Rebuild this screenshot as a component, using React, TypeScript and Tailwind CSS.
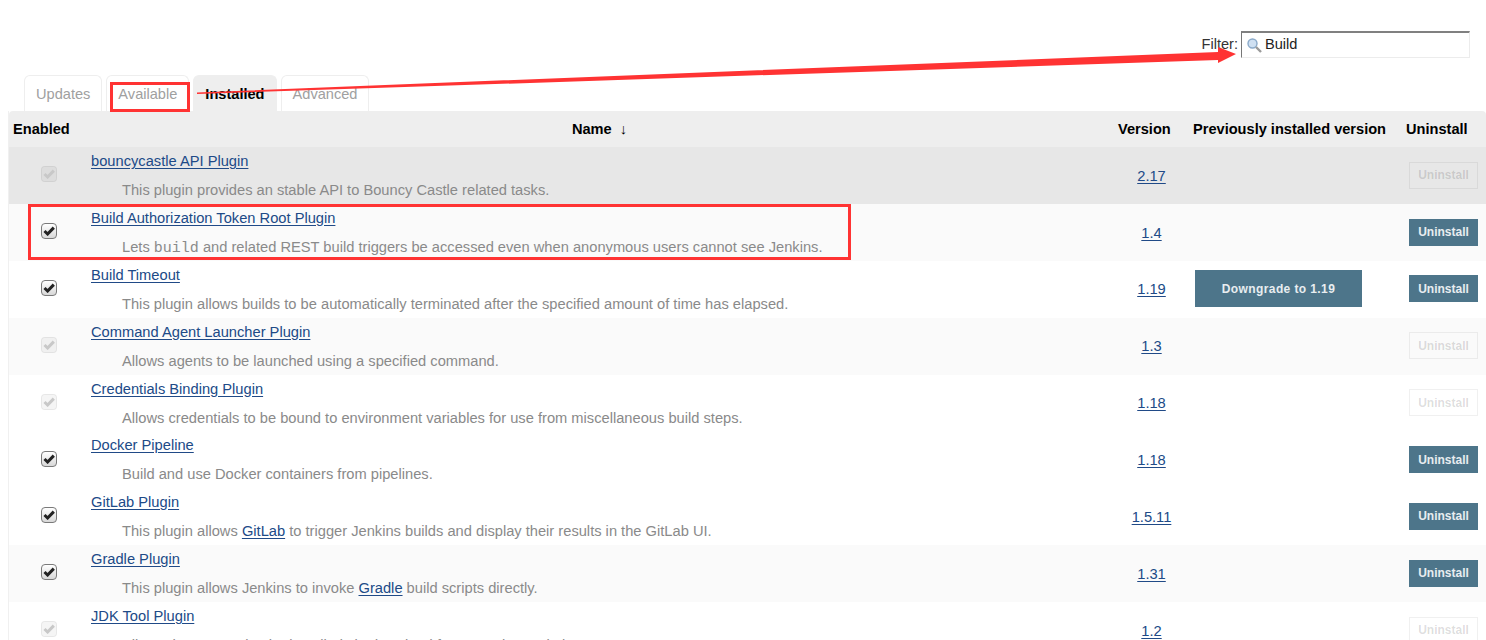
import React from "react";

type Row = {
  name: string;
  desc: React.ReactNode;
  version: string;
  enabled: boolean;
  downgrade?: string;
  bg: string;
};

const A = ({ children }: { children: React.ReactNode }) => (
  <a className="text-[#204a87] underline underline-offset-2" href="#">{children}</a>
);

const rows: Row[] = [
  { name: "bouncycastle API Plugin", desc: "This plugin provides an stable API to Bouncy Castle related tasks.", version: "2.17", enabled: false, bg: "bg-[#e7e7e7]" },
  { name: "Build Authorization Token Root Plugin", desc: <>Lets <code className="font-['Liberation_Mono',monospace] text-[15px]">build</code> and related REST build triggers be accessed even when anonymous users cannot see Jenkins.</>, version: "1.4", enabled: true, bg: "bg-[#fafafa]" },
  { name: "Build Timeout", desc: "This plugin allows builds to be automatically terminated after the specified amount of time has elapsed.", version: "1.19", enabled: true, downgrade: "Downgrade to 1.19", bg: "bg-white" },
  { name: "Command Agent Launcher Plugin", desc: "Allows agents to be launched using a specified command.", version: "1.3", enabled: false, bg: "bg-[#fafafa]" },
  { name: "Credentials Binding Plugin", desc: "Allows credentials to be bound to environment variables for use from miscellaneous build steps.", version: "1.18", enabled: false, bg: "bg-white" },
  { name: "Docker Pipeline", desc: "Build and use Docker containers from pipelines.", version: "1.18", enabled: true, bg: "bg-white" },
  { name: "GitLab Plugin", desc: <>This plugin allows <A>GitLab</A> to trigger Jenkins builds and display their results in the GitLab UI.</>, version: "1.5.11", enabled: true, bg: "bg-white" },
  { name: "Gradle Plugin", desc: <>This plugin allows Jenkins to invoke <A>Gradle</A> build scripts directly.</>, version: "1.31", enabled: true, bg: "bg-[#fafafa]" },
  { name: "JDK Tool Plugin", desc: "Allows the JDK tool to be installed via download from Oracle's website.", version: "1.2", enabled: false, bg: "bg-white" },
];

const Check = ({ on }: { on: boolean }) => (
  <span className={`flex h-[16px] w-[16px] items-center justify-center rounded-[4px] border ${on ? "border-[#7a7a7a] bg-gradient-to-b from-white to-[#d8d8d8]" : "border-black/[0.06] bg-black/[0.04]"}`}>
    <svg width="12" height="10" viewBox="0 0 12 10">
      <path d="M1.5 5 L4.6 8 L10.8 1.6" fill="none" stroke={on ? "#222" : "#c8c8c8"} strokeWidth="3" />
    </svg>
  </span>
);

const Tab = ({ label, active }: { label: string; active?: boolean }) => (
  <div className={`flex h-[36px] items-center rounded-t-[6px] border border-b-0 px-[11px] pt-[2px] ${active ? "border-[#eeeeee] bg-[#eeeeee] font-bold text-black" : "border-[#eeeeee] bg-white text-[#a0a0a0]"}`}>
    {label}
  </div>
);

const grid = "grid grid-cols-[82px_1fr_78px_214px_81px]";

export default function App() {
  return (
    <div className="relative h-[640px] w-[1486px] overflow-hidden bg-white font-['Liberation_Sans',Arial,sans-serif] text-[14.6px] text-[#333]">
      <div className="flex h-[75px] items-start justify-end pt-[31px] pr-[16px]">
        <span className="mr-[3px] mt-[3px] text-[#333]">Filter:</span>
        <div className="flex h-[27px] w-[229px] items-center border border-[#ececec] border-l-[#777] border-t-2 border-t-[#808080] pl-[4px] text-[#222]">
          <svg width="16" height="16" viewBox="0 0 16 16" className="shrink-0">
            <circle cx="6.5" cy="6.5" r="4.5" fill="#cfe0f2" stroke="#8aa9c9" strokeWidth="1.4" />
            <path d="M10 10 L15 15" stroke="#9a9a9a" strokeWidth="2.4" />
          </svg>
          <span className="ml-[3px]">Build</span>
        </div>
      </div>

      <div className="flex h-[36px] gap-[4px] pl-[24px]">
        <Tab label="Updates" />
        <Tab label="Available" />
        <Tab label="Installed" active />
        <Tab label="Advanced" />
      </div>

      <div className="ml-[8px] border-l border-[#f0f0f0]">
        <div className={`${grid} h-[36px] items-center rounded-t-[4px] bg-[#eeeeee] font-bold text-black`}>
          <div className="pl-[4px] pt-[1px]">Enabled</div>
          <div className="pr-[5px] pt-[1px] text-center">Name&nbsp; ↓</div>
          <div className="pl-[5px] pt-[1px]">Version</div>
          <div className="whitespace-nowrap pl-[2px] pt-[1px]">Previously installed version</div>
          <div className="whitespace-nowrap pl-[1px] pt-[1px]">Uninstall</div>
        </div>

        {rows.map((r) => (
          <div key={r.name} className={`${grid} h-[56.875px] text-[14.68px] ${r.bg}`}>
            <div className="flex items-center pb-[2.5px] pl-[32px]">
              <Check on={r.enabled} />
            </div>
            <div className="min-w-0 pt-[3px]">
              <A>{r.name}</A>
              <div className="mt-[10px] whitespace-nowrap pl-[31px] leading-[17px] text-[#8a8a8a]">{r.desc}</div>
            </div>
            <div className="flex items-center justify-center pr-[1px] pt-[0.5px]">
              <A>{r.version}</A>
            </div>
            <div className="flex items-center pb-[0.5px] pl-[4px]">
              {r.downgrade && (
                <button className="flex h-[37px] w-[167px] items-center justify-center border border-[#4d758a] bg-[#4d758a] text-[12px] font-bold tracking-[0.4px] text-[#e8edf0]">
                  {r.downgrade}
                </button>
              )}
            </div>
            <div className="flex items-center pb-[0.5px] pl-[4px]">
              <button className={`flex h-[27px] w-[69px] items-center justify-center border text-[12px] font-bold ${r.enabled ? "border-[#4d758a] bg-[#4d758a] text-[#e8edf0]" : "border-black/[0.06] text-black/[0.14]"}`}>
                Uninstall
              </button>
            </div>
          </div>
        ))}
      </div>

      <div className="pointer-events-none absolute left-[110px] top-[82px] h-[30px] w-[80px] border-[3px] border-[#ff3333]" />
      <div className="pointer-events-none absolute left-[28px] top-[204px] h-[56px] w-[823px] border-[3px] border-[#ff3333]" />
      <svg className="pointer-events-none absolute left-0 top-0" width="1486" height="640">
        <polygon points="197,92.5 1218,52 1218,47 1236,54 1218,63 1218,60 197,94" fill="#ff3333" />
      </svg>
    </div>
  );
}
